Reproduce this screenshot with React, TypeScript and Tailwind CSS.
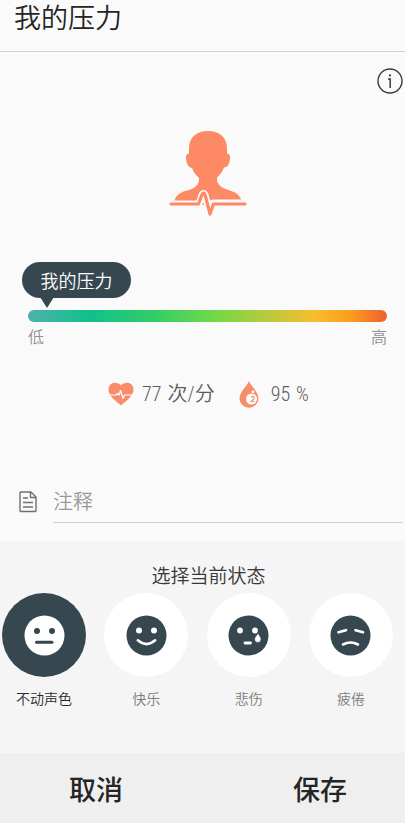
import React, { useState } from "react";

const PersonIcon = () => (
    <svg width="78" height="88" viewBox="0 0 78 88" aria-hidden="true">
        <path
            fill="#fd8a64"
            d="M39 1C27 1 20 8 20 18v5.500c-2.500.2-3.500 2.500-3 5.500.7 5 2.500 8.500 6 9 1.200 4 4 7 7 10 .5 6-2.500 9-8.500 11.500C12.500 62 5.500 63.500 5 75h68C72.500 63.500 65.500 62 56.500 59c-6-2.500-9-5.500-8.500-11.500 3-3 5.800-6 7-10 3.500 0 5.300-3.500 6-8.500.5-3-.5-5.300-3-5.500V18C58 8 51 1 39 1z"
        />
        <path
            fill="none"
            stroke="#fafafa"
            strokeWidth="7"
            strokeLinejoin="round"
            d="M1 74h29l3-9q1.500-3 3 0l5 18 3-10h33"
        />
        <path
            fill="none"
            stroke="#fd8a64"
            strokeWidth="3.200"
            strokeLinecap="round"
            strokeLinejoin="round"
            d="M2 74h27.500l3.500-9.500q1.500-3 3 0L41 84l3.500-10H76"
        />
    </svg>
);

const InfoIcon = () => (
    <svg width="26" height="26" viewBox="0 0 26 26" aria-hidden="true">
        <circle
            cx="13"
            cy="13"
            r="12"
            fill="none"
            stroke="#3c3c3c"
            strokeWidth="1.400"
        />
        <circle cx="13" cy="7.400" r="1.100" fill="#3c3c3c" />
        <path
            d="M11 11h2.200v9"
            fill="none"
            stroke="#3c3c3c"
            strokeWidth="1.500"
        />
    </svg>
);

const HeartIcon = () => (
    <svg width="26" height="24" viewBox="0 0 26 24" aria-hidden="true">
        <path
            fill="#f98d6b"
            d="M13 23.500C7 18.500.5 13.500.5 7.500.5 3.500 3.500.8 7 .8c2.500 0 4.800.8 6 2.600C14.200 1.600 16.500.8 19 .8c3.500 0 6.500 2.700 6.500 6.700 0 6-6.500 11-12.500 16z"
        />
        <path
            fill="none"
            stroke="#fff"
            strokeWidth="1.200"
            strokeLinejoin="round"
            d="M1 13h7l1.500-1.500L11 13l1.500-4.500 2.500 8 1.500-3.500H25"
        />
    </svg>
);

const DropIcon = () => (
    <svg width="20" height="27" viewBox="0 0 20 27" aria-hidden="true">
        <path
            fill="#f98d6b"
            d="M10 0C8 5 .5 11 .5 17.500a9.500 9.200 0 0 0 19 0C19.500 11 12 5 10 0z"
        />
        <circle cx="12.500" cy="18" r="5.500" fill="#fff" />
        <circle cx="14" cy="10.800" r="1.400" fill="#fff" />
        <path
            fill="none"
            stroke="#f98d6b"
            strokeWidth="1.200"
            d="M12.300 16.600q.2-1.300 1.500-1.300 1.600.2 1.400 1.600-.2 1.200-3 3.600h3.300"
        />
    </svg>
);

const NoteIcon = () => (
    <svg
        width="18"
        height="22"
        viewBox="0 0 18 22"
        fill="none"
        stroke="#6f6f6f"
        strokeWidth="1.400"
        strokeLinejoin="round"
        aria-hidden="true"
    >
        <path d="M2 1h10l5 5v13.500a1 1 0 0 1-1 1H2a1 1 0 0 1-1-1V2a1 1 0 0 1 1-1z" />
        <path d="M11.500 1v5.500H17M4 7h5M4 11.500h10M4 16h10" />
    </svg>
);

const faces: Record<string, React.ReactNode> = {
    neutral: (
        <>
            <circle cx="13" cy="16" r="3" fill="currentColor" />
            <circle cx="28" cy="16" r="3" fill="currentColor" />
            <path d="M12.500 27.300h15.500" strokeWidth="3" />
        </>
    ),
    happy: (
        <>
            <circle cx="13" cy="15.500" r="3" fill="currentColor" />
            <circle cx="28" cy="15.500" r="3" fill="currentColor" />
            <path d="M11.800 25.300q8.700 7.500 17.400 0" strokeWidth="2.600" />
        </>
    ),
    sad: (
        <>
            <circle cx="12" cy="15.500" r="2.900" fill="currentColor" />
            <circle cx="27" cy="15.500" r="2.900" fill="currentColor" />
            <path d="M17 28h5.500" strokeWidth="2.800" />
            <path
                d="M30 17.500c-.6 3-3.400 4.200-3.400 6.800a3.200 3.200 0 0 0 6.400 0C33 21.700 30.500 20.500 30 17.500z"
                fill="currentColor"
                stroke="#36474f"
                strokeWidth=".6"
            />
        </>
    ),
    tired: (
        <>
            <path d="M8.500 17.300l7.500-2.100M25.500 15.200l7.500 2.100" strokeWidth="2.600" />
            <path d="M13 29.500q7.500-4 15 0" strokeWidth="2.600" />
        </>
    ),
};

const moods = [
    { id: "neutral", label: "不动声色" },
    { id: "happy", label: "快乐" },
    { id: "sad", label: "悲伤" },
    { id: "tired", label: "疲倦" },
];

const App = () => {
    const [mood, setMood] = useState("neutral");
    const [note, setNote] = useState("");

    return (
        <div className="flex min-h-screen flex-col bg-[#fafafa] font-['Roboto_Condensed','Roboto','Noto_Sans_CJK_SC',sans-serif] font-[350] text-[#252525]">
            <header className="border-b border-[#d2d2d2] px-3.5 pt-0.5 pb-3.5">
                <h1 className="text-[27px] leading-[35px]">我的压力</h1>
            </header>

            <main className="flex grow flex-col">
                <div className="flex justify-end pt-4 pr-0.5">
                    <button type="button" aria-label="信息">
                        <InfoIcon />
                    </button>
                </div>
                <div className="flex justify-center pt-9 pl-2.5">
                    <PersonIcon />
                </div>

                <section className="pt-11 pr-[18px] pl-7">
                    <div className="relative -ml-1.5 flex h-9 w-[109px] items-center justify-center rounded-full bg-[#36474f] pt-1 text-lg text-white">
                        我的压力
                        <svg
                            className="absolute top-[35px] left-[18px]"
                            width="14"
                            height="12"
                            viewBox="0 0 14 12"
                            aria-hidden="true"
                        >
                            <path d="M0 0h14L7 11z" fill="#36474f" />
                        </svg>
                    </div>
                    <div className="mt-3 h-3 rounded-full bg-[linear-gradient(90deg,#4fb0ac_0%,#10c08c_17%,#32cd68_35%,#72d948_52%,#b5cb3e_66%,#f8bd2e_80%,#fb9c1c_90%,#ef6034_100%)]" />
                    <div className="flex justify-between pt-1 text-base leading-6 text-[#909090]">
                        <span>低</span>
                        <span>高</span>
                    </div>
                </section>

                <div className="flex items-center justify-center gap-6 pt-7 pl-3 text-xl leading-8 text-[#5a5a5a]">
                    <div className="flex items-center gap-2">
                        <HeartIcon />
                        <span className="flex gap-1.5">
                            <span>77</span>
                            <span>次/分</span>
                        </span>
                    </div>
                    <div className="flex items-center gap-3">
                        <DropIcon />
                        <span className="flex gap-1.5">
                            <span>95</span>
                            <span>%</span>
                        </span>
                    </div>
                </div>

                <div className="flex items-center gap-4 pt-[70px] pr-0.5 pb-[18px] pl-[19px]">
                    <NoteIcon />
                    <input
                        type="text"
                        aria-label="注释"
                        placeholder="注释"
                        value={note}
                        onChange={(e) => setNote(e.target.value)}
                        className="h-[43px] min-w-0 grow border-b border-[#cfcfcf] bg-transparent pt-0.5 text-xl outline-none placeholder:text-[#999]"
                    />
                </div>

                <section className="grow bg-[#f5f5f5] pt-[22px]">
                    <h2 className="pl-3 text-center text-[19px] leading-7 text-[#383838]">
                        选择当前状态
                    </h2>
                    <div className="flex justify-between pt-0.5 pr-3 pb-10 pl-0.5">
                        {moods.map(({ id, label }) => (
                            <button
                                key={id}
                                type="button"
                                aria-pressed={mood === id}
                                onClick={() => setMood(id)}
                                className="flex flex-col items-center gap-3"
                            >
                                <span
                                    className={`flex size-[84px] items-center justify-center rounded-full ${
                                        mood === id
                                            ? "bg-[#36474f] text-[#36474f]"
                                            : "bg-white text-white"
                                    }`}
                                >
                                    <svg
                                        width="41"
                                        height="41"
                                        viewBox="0 0 41 41"
                                        fill="none"
                                        strokeLinecap="round"
                                        aria-hidden="true"
                                    >
                                        <circle
                                            cx="20.500"
                                            cy="20.500"
                                            r="20"
                                            fill={mood === id ? "#fff" : "#36474f"}
                                        />
                                        <g stroke="currentColor" strokeWidth="0">
                                            {faces[id]}
                                        </g>
                                    </svg>
                                </span>
                                <span
                                    className={`text-sm leading-5 ${
                                        mood === id
                                            ? "text-[#2a2a2a]"
                                            : "text-[#7c7c7c]"
                                    }`}
                                >
                                    {label}
                                </span>
                            </button>
                        ))}
                    </div>
                </section>
            </main>

            <footer className="flex h-[70px] items-center justify-between bg-[#efefef] pt-1.5 pr-[58px] pl-[69px] text-[27px] font-medium">
                <button type="button">取消</button>
                <button type="button">保存</button>
            </footer>
        </div>
    );
};

export default App;
